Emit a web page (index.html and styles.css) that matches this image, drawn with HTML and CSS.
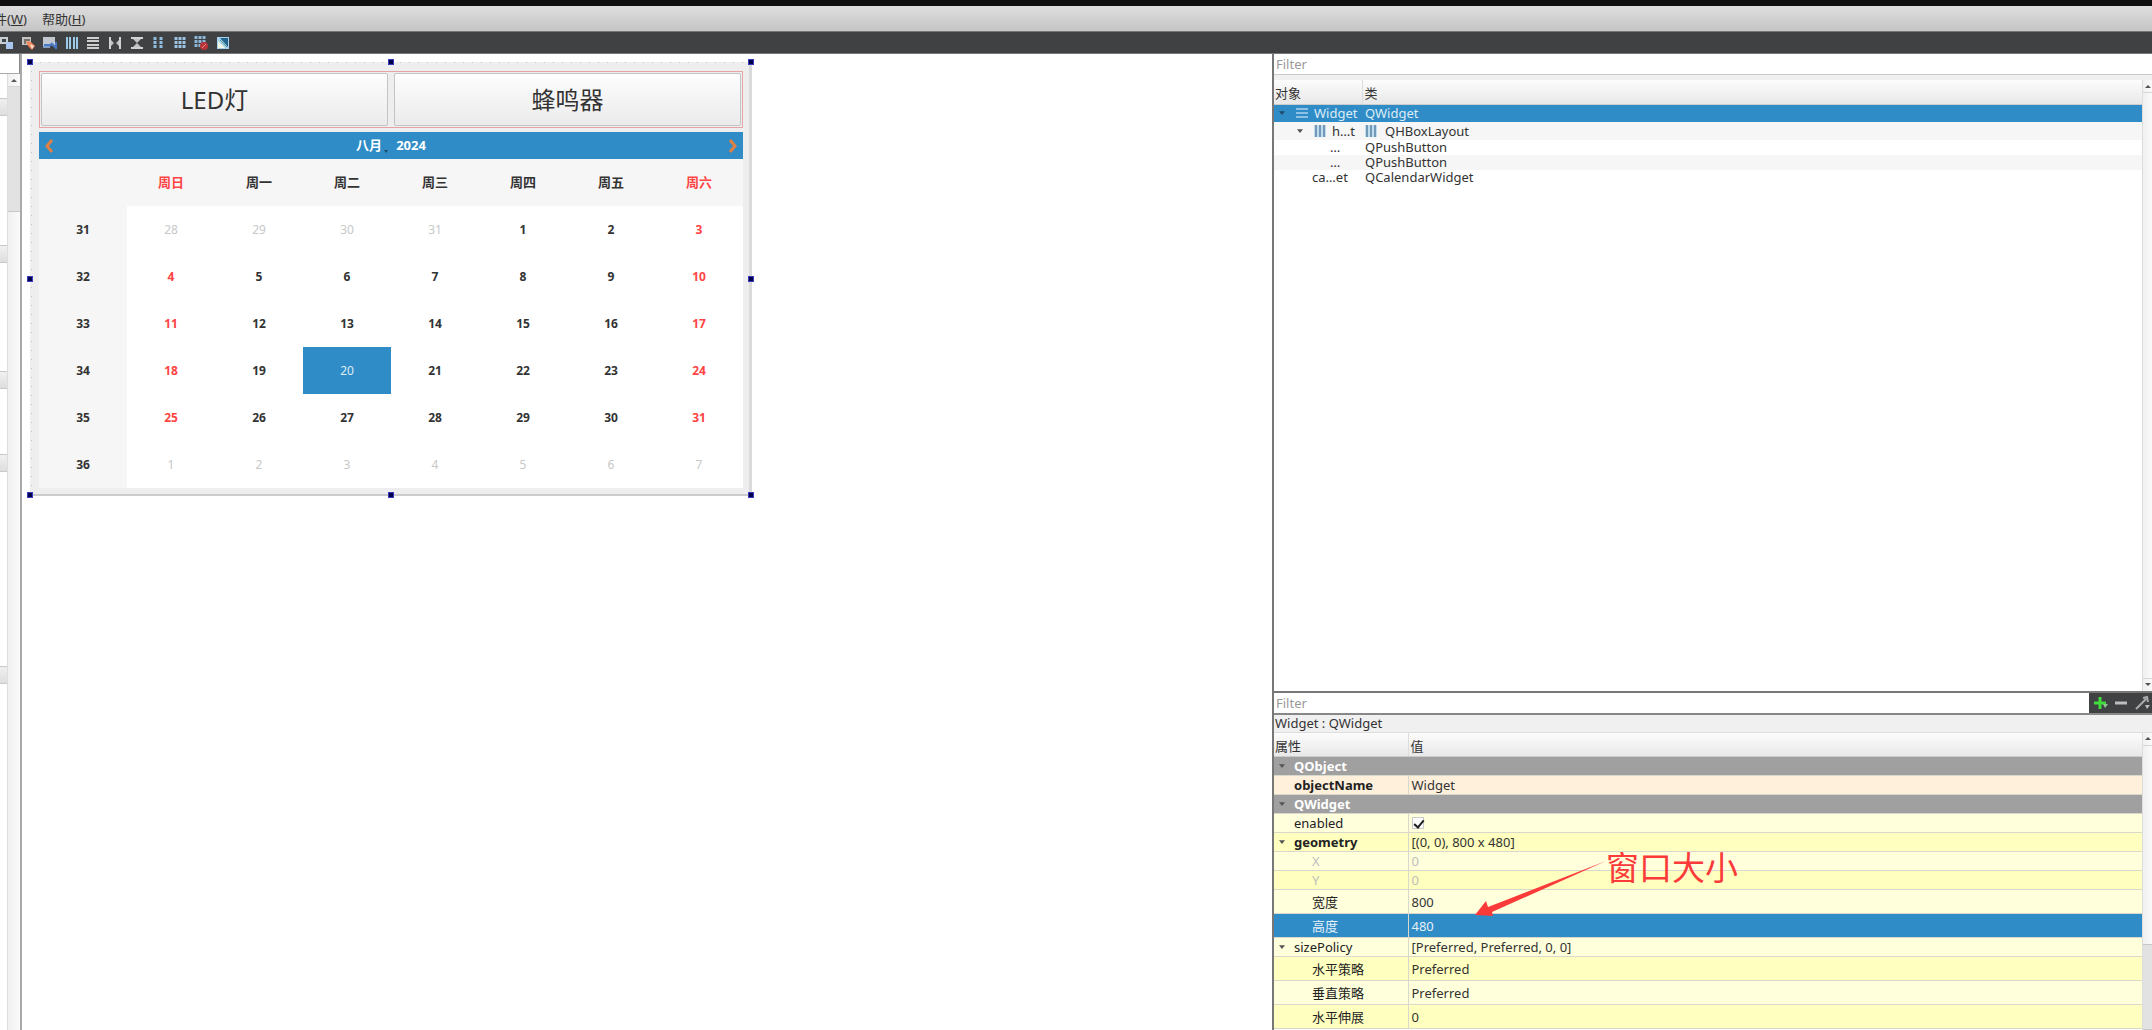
FILE: index.html
```html
<!DOCTYPE html>
<html lang="zh-CN">
<head>
  <meta charset="UTF-8" />
  <meta name="viewport" content="width=device-width, initial-scale=1.0"/>
  <title>Widget - Qt Designer</title>
  <link rel="stylesheet" href="styles.css">
</head>
<body>
  <nav class="menubar">
    <button type="button">件(<u>W</u>)</button>
    <button type="button">帮助(<u>H</u>)</button>
  </nav>

  <div class="toolbar">
    <div class="tools">
      <button type="button" aria-label="Edit widgets"><svg viewBox="0 0 16 16"><rect x="1" y="2" width="8" height="7" fill="#c8cdd2"/><rect x="3" y="4" width="4" height="3" fill="#39464f"/><rect x="7" y="7" width="7" height="7" fill="#a9c7ee"/></svg></button>
      <button type="button" aria-label="Edit signals"><svg viewBox="0 0 16 16"><rect x="1" y="2" width="9" height="8" fill="#c4c4c4"/><path d="M3 4h6v2H5v3H3z" fill="#77716d"/><path d="M5 6l5 1 4 4-3 4-4-4z" fill="#f0865a"/><path d="M9 9l4 2-2 3z" fill="#ffe3d0"/></svg></button>
      <button type="button" aria-label="Edit buddies"><svg viewBox="0 0 16 16"><rect x="1" y="2" width="12" height="9" fill="#c3c8d0"/><path d="M2 10h10M9 8l5 5M14 7v7" stroke="#4779c4" stroke-width="2" fill="none"/><path d="M1 12h7" stroke="#829fc7" stroke-width="2"/></svg></button>
      <button type="button" aria-label="Lay out horizontally"><svg viewBox="0 0 16 16"><path d="M3 2v12M6 2v12M10 2v12M13 2v12" stroke="#9cc9e8" stroke-width="2"/></svg></button>
      <button type="button" aria-label="Lay out vertically"><svg viewBox="0 0 16 16"><path d="M2 3h12M2 6h12M2 10h12M2 13h12" stroke="#cfcfcf" stroke-width="2"/></svg></button>
      <button type="button" aria-label="Horizontal splitter"><svg viewBox="0 0 16 16"><path d="M3 2v12M13 2v12" stroke="#d2d2d2" stroke-width="2"/><path d="M4 5l3 3-3 3zM12 5L9 8l3 3z" fill="#c2c2c2"/></svg></button>
      <button type="button" aria-label="Vertical splitter"><svg viewBox="0 0 16 16"><path d="M2 3h12M2 13h12" stroke="#d2d2d2" stroke-width="2"/><path d="M4 4h8L8 8zM4 12h8L8 8z" fill="#c2c2c2"/></svg></button>
      <button type="button" aria-label="Form layout"><svg viewBox="0 0 16 16"><path d="M5 2v12M11 2v12" stroke="#8fbde0" stroke-width="3" stroke-dasharray="3 1"/></svg></button>
      <button type="button" aria-label="Grid layout"><svg viewBox="0 0 16 16"><path d="M4 2v12M8 2v12M12 2v12" stroke="#9cc3e4" stroke-width="3" stroke-dasharray="3 1"/></svg></button>
      <button type="button" aria-label="Break layout"><svg viewBox="0 0 16 16"><path d="M3 1v12M7 1v12M11 1v12" stroke="#8bb6d8" stroke-width="3" stroke-dasharray="3 1"/><circle cx="11" cy="11" r="4" fill="#b9343a"/><path d="M9 13l4-4" stroke="#e08a8a"/></svg></button>
      <button type="button" aria-label="Adjust size"><svg viewBox="0 0 16 16"><rect x="2" y="2" width="12" height="12" fill="#a5d0ee"/><path d="M5 3h8v9z" fill="#25648f"/><path d="M3 13V6l7 7z" fill="#f2f8e8"/><path d="M5 5l7 7" stroke="#59a37f"/></svg></button>
    </div>
  </div>

  <main class="workspace">
    <aside class="widget-box">
      <input type="text" class="box-filter" aria-label="Filter widgets">
      <div class="box-body">
        <div class="box-list">
          <div class="category"></div>
          <div class="category"></div>
          <div class="category"></div>
          <div class="category"></div>
          <div class="category"></div>
        </div>
        <div class="scrollbar">
          <span class="scroll-btn"><svg viewBox="0 0 8 5"><path d="M1 4l3-3 3 3z" fill="#555"/></svg></span>
          <span class="scroll-thumb"></span>
        </div>
      </div>
    </aside>

    <section class="canvas">
      <div class="form">
        <i class="handle top left"></i><i class="handle top mid"></i><i class="handle top right"></i>
        <i class="handle center left"></i><i class="handle center right"></i>
        <i class="handle bottom left"></i><i class="handle bottom mid"></i><i class="handle bottom right"></i>

        <div class="hbox">
          <button type="button" class="push">LED灯</button>
          <button type="button" class="push">蜂鸣器</button>
        </div>

        <div class="calendar">
          <div class="cal-nav">
            <button type="button" aria-label="Previous month"><svg viewBox="0 0 10 16"><path d="M8 2L3 8l5 6" fill="none" stroke="#df8044" stroke-width="3"/></svg></button>
            <div class="cal-date">
              <button type="button">八月<svg viewBox="0 0 4 3"><path d="M0 0h4L2 3z" fill="#1f4a68"/></svg></button>
              <button type="button">2024</button>
            </div>
            <button type="button" aria-label="Next month"><svg viewBox="0 0 10 16"><path d="M2 2l5 6-5 6" fill="none" stroke="#df8044" stroke-width="3"/></svg></button>
          </div>
          <table class="cal-grid">
            <thead>
              <tr><th></th><th class="red">周日</th><th>周一</th><th>周二</th><th>周三</th><th>周四</th><th>周五</th><th class="red">周六</th></tr>
            </thead>
            <tbody>
              <tr><th>31</th><td class="out">28</td><td class="out">29</td><td class="out">30</td><td class="out">31</td><td>1</td><td>2</td><td class="red">3</td></tr>
              <tr><th>32</th><td class="red">4</td><td>5</td><td>6</td><td>7</td><td>8</td><td>9</td><td class="red">10</td></tr>
              <tr><th>33</th><td class="red">11</td><td>12</td><td>13</td><td>14</td><td>15</td><td>16</td><td class="red">17</td></tr>
              <tr><th>34</th><td class="red">18</td><td>19</td><td class="today">20</td><td>21</td><td>22</td><td>23</td><td class="red">24</td></tr>
              <tr><th>35</th><td class="red">25</td><td>26</td><td>27</td><td>28</td><td>29</td><td>30</td><td class="red">31</td></tr>
              <tr><th>36</th><td class="out">1</td><td class="out">2</td><td class="out">3</td><td class="out">4</td><td class="out">5</td><td class="out">6</td><td class="out">7</td></tr>
            </tbody>
          </table>
        </div>
      </div>
    </section>

    <aside class="dock">
      <section class="inspector">
        <input type="text" class="filter" placeholder="Filter" aria-label="Filter objects">
        <div class="panel-body">
          <div class="panel-main">
            <table class="tree">
              <thead>
                <tr><th class="col-object">对象</th><th>类</th></tr>
              </thead>
              <tbody>
                <tr class="selected">
                  <td><div class="node"><svg class="arrow" viewBox="0 0 8 5"><path d="M0 0h8L4 5z"/></svg><svg class="icon" viewBox="0 0 12 12"><path d="M0 2h12M0 6h12M0 10h12" stroke="#8cc0e4" stroke-width="2"/></svg>Widget</div></td>
                  <td>QWidget</td>
                </tr>
                <tr class="alt">
                  <td><div class="node level-1"><svg class="arrow" viewBox="0 0 8 5"><path d="M0 0h8L4 5z"/></svg><svg class="icon" viewBox="0 0 12 12"><rect width="12" height="12" fill="#c2dcef"/><path d="M2 0v12M6 0v12M10 0v12" stroke="#7399b8" stroke-width="2"/></svg>h…t</div></td>
                  <td><div class="node"><svg class="icon" viewBox="0 0 12 12"><rect width="12" height="12" fill="#c2dcef"/><path d="M2 0v12M6 0v12M10 0v12" stroke="#7399b8" stroke-width="2"/></svg>QHBoxLayout</div></td>
                </tr>
                <tr class="short"><td><div class="node level-2">…</div></td><td>QPushButton</td></tr>
                <tr class="short alt"><td><div class="node level-2">…</div></td><td>QPushButton</td></tr>
                <tr class="short"><td><div class="node leaf">ca…et</div></td><td>QCalendarWidget</td></tr>
              </tbody>
            </table>
          </div>
          <div class="scrollbar">
            <span class="scroll-btn"><svg viewBox="0 0 8 5"><path d="M1 4l3-3 3 3z" fill="#555"/></svg></span>
            <span class="scroll-btn last"><svg viewBox="0 0 8 5"><path d="M1 1l3 3 3-3z" fill="#555"/></svg></span>
          </div>
        </div>
      </section>

      <section class="properties">
        <div class="prop-bar">
          <input type="text" class="filter" placeholder="Filter" aria-label="Filter properties">
          <button type="button" aria-label="Add property"><svg viewBox="0 0 16 16"><path d="M8 2v12M2 8h12" stroke="#3fdc3c" stroke-width="3"/><path d="M11 9h5l-3 4z" fill="#8ac98a"/></svg></button>
          <button type="button" aria-label="Remove property"><svg viewBox="0 0 16 16"><path d="M2 8h12" stroke="#bdbdbd" stroke-width="3"/></svg></button>
          <button type="button" aria-label="Configure"><svg viewBox="0 0 16 16"><path d="M2 14L12 4M9 3l4-1 1 5" stroke="#aaa" stroke-width="2" fill="none"/><path d="M11 10h5l-3 4z" fill="#bbb"/></svg></button>
        </div>
        <div class="prop-title">Widget : QWidget</div>
        <div class="panel-body">
          <div class="panel-main">
            <table class="props">
              <thead>
                <tr><th class="col-name">属性</th><th>值</th></tr>
              </thead>
              <tbody>
                <tr class="group"><th colspan="2"><svg class="arrow" viewBox="0 0 8 5"><path d="M0 0h8L4 5z"/></svg>QObject</th></tr>
                <tr class="peach"><th>objectName</th><td>Widget</td></tr>
                <tr class="group"><th colspan="2"><svg class="arrow" viewBox="0 0 8 5"><path d="M0 0h8L4 5z"/></svg>QWidget</th></tr>
                <tr><th class="plain"><label for="enabled">enabled</label></th><td><input type="checkbox" id="enabled" checked></td></tr>
                <tr class="deep"><th><svg class="arrow" viewBox="0 0 8 5"><path d="M0 0h8L4 5z"/></svg>geometry</th><td>[(0, 0), 800 x 480]</td></tr>
                <tr class="disabled"><th class="plain sub">X</th><td>0</td></tr>
                <tr class="deep disabled"><th class="plain sub">Y</th><td>0</td></tr>
                <tr class="tall"><th class="plain sub">宽度</th><td>800</td></tr>
                <tr class="tall current"><th class="plain sub">高度</th><td>480</td></tr>
                <tr><th class="plain"><svg class="arrow" viewBox="0 0 8 5"><path d="M0 0h8L4 5z"/></svg>sizePolicy</th><td>[Preferred, Preferred, 0, 0]</td></tr>
                <tr class="tall deep"><th class="plain sub">水平策略</th><td>Preferred</td></tr>
                <tr class="tall"><th class="plain sub">垂直策略</th><td>Preferred</td></tr>
                <tr class="tall deep"><th class="plain sub">水平伸展</th><td>0</td></tr>
              </tbody>
            </table>
            <div class="note">
              <svg viewBox="0 0 132 56"><path d="M1 55L12 41l2 6L132 1 18 52l1 4z" fill="#fb3a3a"/></svg>
              <span>窗口大小</span>
            </div>
          </div>
          <div class="scrollbar">
            <span class="scroll-btn"><svg viewBox="0 0 8 5"><path d="M1 4l3-3 3 3z" fill="#555"/></svg></span>
            <span class="scroll-thumb"></span>
          </div>
        </div>
      </section>
    </aside>
  </main>
</body>
</html>
```
FILE: styles.css
```css
* {
  margin: 0;
  padding: 0;
  box-sizing: border-box;
}

body {
  height: 100vh;
  display: flex;
  flex-direction: column;
  overflow: hidden;
  background-color: #fff;
  color: #333;
  border-top: 6px solid #0f0f0f;
  font-family: "Noto Sans", "Noto Sans CJK SC", sans-serif;
  font-size: 13px;
  line-height: 15px;
}

button, input {
  font: inherit;
  color: inherit;
  border: none;
  background: none;
  outline: none;
}

svg {
  display: block;
}

table {
  width: 100%;
  border-collapse: collapse;
  table-layout: fixed;
}

/* Menu and toolbar */
.menubar {
  flex: none;
  height: 25px;
  display: flex;
  align-items: center;
  gap: 15px;
  margin-left: -6px;
  padding-top: 2px;
  background: linear-gradient(#dedede, #c5c5c5);
  white-space: nowrap;
}

.toolbar {
  flex: none;
  height: 23px;
  background-color: #404142;
  border-top: 1px solid #777;
  border-bottom: 1px solid #777;
}

.tools {
  width: 232px;
  height: 100%;
  margin-left: -1px;
  display: flex;
  align-items: center;
  justify-content: space-between;
}

.tools svg {
  width: 16px;
  height: 16px;
}

.workspace {
  flex: 1;
  min-height: 0;
  display: grid;
  grid-template-columns: 22px minmax(0, 1250fr) minmax(0, 880fr);
}

/* Widget box */
.widget-box {
  display: flex;
  flex-direction: column;
  min-height: 0;
  border-right: 2px solid #aaa;
}

.box-filter {
  width: 100%;
  height: 20px;
  border-right: 1px solid #888;
  border-bottom: 1px solid #aaa;
}

.box-body {
  flex: 1;
  display: flex;
}

.box-list {
  flex: 1;
}

.category {
  height: 18px;
  margin-bottom: 65px;
  background: linear-gradient(#f0f0f0, #dedede);
  border-top: 1px solid #c8c8c8;
  border-bottom: 1px solid #c8c8c8;
}

.category:nth-child(1) {
  margin-top: 24px;
  margin-bottom: 129px;
}

.category:nth-child(2) {
  margin-bottom: 108px;
}

.category:nth-child(4) {
  margin-bottom: 194px;
}

.scrollbar {
  flex: none;
  width: 13px;
  display: flex;
  flex-direction: column;
  background: linear-gradient(90deg, #f0f0f0, #fafafa);
  border-left: 1px solid #ddd;
}

.scroll-btn {
  height: 13px;
  display: flex;
  align-items: center;
  justify-content: center;
  border-bottom: 1px solid #d5d5d5;
}

.scroll-btn.last {
  margin-top: auto;
  border-top: 1px solid #d5d5d5;
  border-bottom: none;
}

.scroll-btn svg {
  width: 8px;
  height: 5px;
}

.scroll-thumb {
  height: 125px;
  background-color: #e2e2e2;
  border-bottom: 1px solid #c8c8c8;
}

/* Form being edited */
.canvas {
  padding: 8px;
}

.form {
  position: relative;
  width: 722px;
  padding: 9px 6px 6px 9px;
  background-color: #eee;
  border-right: 3px solid #dadada;
  border-bottom: 2px solid #ccc;
}

.form::before,
.form::after {
  content: "";
  position: absolute;
  left: 1px;
  top: 0;
}

/* Designer grid dots along the top and left edges */
.form::before {
  right: 0;
  height: 1px;
  background: repeating-linear-gradient(90deg, #c4c4c4 0 1px, transparent 1px 9px);
}

.form::after {
  bottom: 0;
  width: 1px;
  background: repeating-linear-gradient(#c4c4c4 0 1px, transparent 1px 9px);
}

.handle {
  position: absolute;
  z-index: 1;
  width: 6px;
  height: 6px;
  background-color: #00004a;
  border: 1px solid #3a3ac0;
}

.handle.top { top: -3px; }
.handle.center { top: 214px; }
.handle.bottom { bottom: -4px; }
.handle.left { left: -3px; }
.handle.mid { left: 358px; }
.handle.right { right: -5px; }

.hbox {
  height: 57px;
  display: flex;
  gap: 6px;
  padding: 1px;
  border: 1px solid #e5a5a5;
}

.push {
  flex: 1;
  font-size: 24px;
  line-height: 32px;
  background: linear-gradient(#fdfdfd, #ebebeb);
  border: 1px solid #c4c4c4;
  border-radius: 2px;
}

.calendar {
  margin-top: 4px;
}

.cal-nav {
  height: 27px;
  display: flex;
  align-items: center;
  justify-content: space-between;
  padding: 0 5px;
  background-color: #308cc6;
  color: #fff;
  font-weight: bold;
}

.cal-nav > button svg {
  width: 10px;
  height: 16px;
}

.cal-date {
  display: flex;
  gap: 8px;
}

.cal-date button {
  display: flex;
  align-items: flex-end;
}

.cal-date svg {
  flex: none;
  width: 4px;
  height: 3px;
  margin-left: 2px;
}

.cal-grid {
  background-color: #fff;
  font-size: 12px;
  font-weight: bold;
  text-align: center;
}

.cal-grid tr {
  height: 47px;
}

.cal-grid th {
  background-color: #f6f6f6;
}

.cal-grid thead th {
  font-size: 13px;
}

.cal-grid .red {
  color: #ff4444;
}

.cal-grid .out {
  color: #c8c8c8;
  font-weight: normal;
}

.cal-grid .today {
  background-color: #308cc6;
  color: #dcecf7;
  font-weight: normal;
}

/* Right dock */
.dock {
  display: flex;
  flex-direction: column;
  min-height: 0;
  border-left: 2px solid #777;
}

.inspector {
  flex: 638 1 0;
  min-height: 0;
  display: flex;
  flex-direction: column;
}

.properties {
  flex: 338 1 0;
  min-height: 0;
  display: flex;
  flex-direction: column;
  border-top: 2px solid #777;
}

.filter {
  flex: none;
  height: 21px;
  padding: 0 2px;
  background-color: #fff;
  border-bottom: 1px solid #ccc;
}

.filter::placeholder {
  color: #999;
  opacity: 1;
}

.inspector .panel-body {
  border-top: 5px solid #f0f0f0;
}

.panel-body {
  flex: 1;
  min-height: 0;
  display: flex;
}

.panel-main {
  position: relative;
  flex: 1;
  min-width: 0;
}

.dock .scrollbar {
  width: 10px;
}

.dock thead th {
  padding: 4px 0 0 1px;
  background: linear-gradient(#fcfcfc, #e8e8e8);
  border-bottom: 1px solid #ccc;
  font-weight: normal;
  text-align: left;
}

.dock thead th + th {
  border-left: 1px solid #ddd;
  padding-left: 2px;
}

.arrow {
  flex: none;
  width: 6px;
  height: 4px;
  fill: #555;
}

.tree thead tr {
  height: 24px;
}

.tree tbody tr {
  height: 18px;
}

.tree tbody tr.short {
  height: 15px;
}

.col-object {
  width: 88px;
}

.tree td + td {
  padding-left: 3px;
}

.tree .alt {
  background-color: #f6f6f6;
}

.tree .selected {
  background-color: #308cc6;
  color: #dcecf7;
}

.selected .arrow {
  fill: #1f4a68;
}

.node {
  display: flex;
  align-items: center;
  gap: 6px;
  padding-left: 5px;
}

.node .arrow {
  margin-right: 5px;
}

.node .icon {
  flex: none;
  width: 12px;
  height: 12px;
}

td + td .node {
  gap: 8px;
  padding-left: 0;
}

.level-1 {
  padding-left: 23px;
}

.level-2 {
  padding-left: 56px;
}

.leaf {
  padding-left: 38px;
}

/* Property editor */
.prop-bar {
  flex: none;
  height: 22px;
  display: flex;
  background-color: #404142;
  border-bottom: 2px solid #888;
}

.prop-bar .filter {
  flex: 1;
  min-width: 0;
  height: 20px;
  border: none;
}

.prop-bar button {
  width: 21px;
  display: flex;
  align-items: center;
  justify-content: center;
}

.prop-bar svg {
  width: 16px;
  height: 16px;
}

.prop-title {
  flex: none;
  height: 18px;
  padding: 1px;
  background-color: #f0f0f0;
  border-bottom: 1px solid #ddd;
}

.props thead tr {
  height: 24px;
}

.col-name {
  width: 134px;
}

.props tbody tr {
  height: 19px;
  background-color: #ffffdc;
}

.props tbody th,
.props tbody td {
  border-bottom: 1px solid #d8d8cc;
  text-align: left;
}

.props tbody th {
  padding-left: 20px;
  color: #222;
}

.props tbody td {
  padding-left: 3px;
  border-left: 1px solid #d8d8cc;
}

.props tbody .arrow {
  float: left;
  margin: 5px 0 0 -15px;
}

.props tbody .plain {
  font-weight: normal;
}

.props tbody .sub {
  padding-left: 38px;
}

.props tbody .tall {
  height: 24px;
}

.props .tall th,
.props .tall td {
  padding-top: 2px;
}

.props tbody .deep {
  background-color: #ffffbf;
}

.props tbody .peach {
  background-color: #fff0dc;
}

.props tbody .group {
  background-color: #a0a0a0;
}

.props tbody .group th {
  color: #fff;
}

.props tbody .disabled th,
.props tbody .disabled td {
  color: #bebebe;
}

.props tbody .current {
  background-color: #308cc6;
}

.props .current th,
.props .current td {
  color: #e4f0f8;
}

.props input {
  appearance: none;
  display: block;
  width: 12px;
  height: 12px;
  background-color: #fff;
  border: 1px solid #ccc;
}

.props input:checked::before {
  content: "";
  display: block;
  width: 4px;
  height: 8px;
  margin: 0 0 0 3px;
  border: solid #222;
  border-width: 0 2px 2px 0;
  transform: rotate(40deg);
}

.properties .scroll-thumb {
  flex: 1;
  margin-top: 198px;
  border-top: 1px solid #c8c8c8;
}

/* Callout drawn over the property rows */
.note {
  position: absolute;
  left: 200px;
  top: 118px;
  display: flex;
  align-items: flex-start;
  color: #fb3a3a;
  font-size: 33px;
  line-height: 34px;
}

.note svg {
  width: 132px;
  height: 56px;
  margin-top: 9px;
}
```
